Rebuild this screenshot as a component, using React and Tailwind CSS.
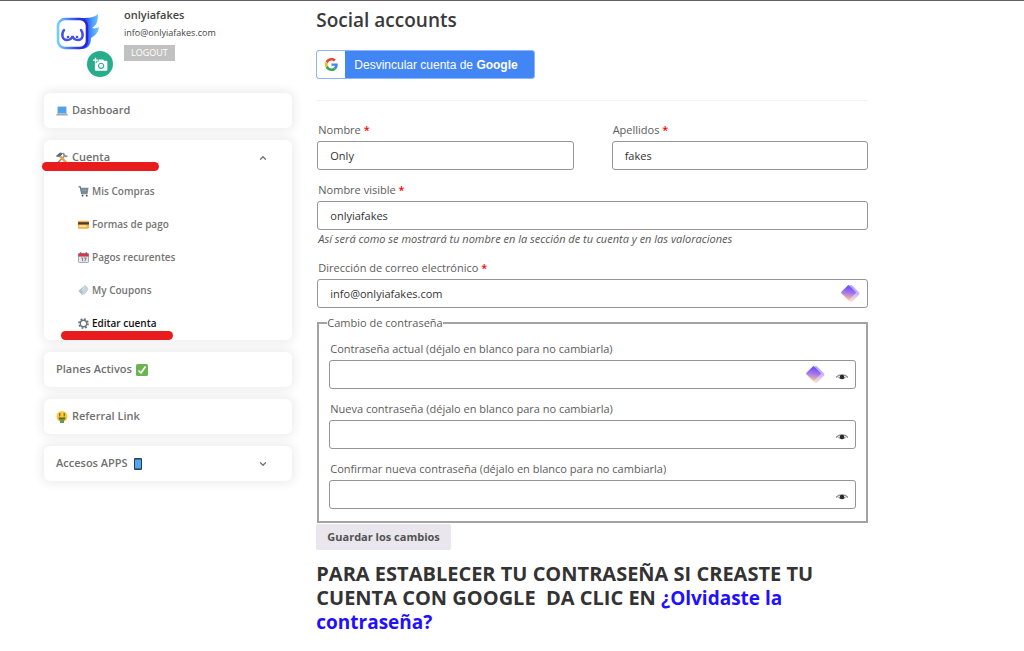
import { ChevronDown, ChevronUp } from "lucide-react";

function LogoIcon() {
  return (
    <svg viewBox="0 0 44 38" className="w-11 h-[38px]" aria-hidden="true">
      <defs>
        <linearGradient id="wing" x1="0" y1="0" x2="1" y2="0">
          <stop offset="0" stopColor="#2a2ff0" />
          <stop offset="0.6" stopColor="#2f48f2" />
          <stop offset="0.8" stopColor="#4c9cf8" />
          <stop offset="1" stopColor="#6ccbfb" />
        </linearGradient>
        <linearGradient id="frame" x1="0" y1="0" x2="1" y2="0">
          <stop offset="0" stopColor="#74d0fb" />
          <stop offset="0.7" stopColor="#2b35f0" />
          <stop offset="1" stopColor="#2323e6" />
        </linearGradient>
      </defs>
      <path d="M9 6 C20 3 35 8 42 1 C42 8 41 12 36 15 C39 16 41 15 43 14 C42 21 38 23 35 25 C35 32 32 36 25 36 Z" fill="url(#wing)" />
      <rect x="2" y="6" width="29" height="29" rx="7" fill="#fff" stroke="url(#frame)" strokeWidth="2.6" />
      <path d="M8 17 C5 21 6 27 11 27 C14 27 16 25 16.5 23 C17 25 19 27 22 27 C27 27 28 21 25 17" fill="none" stroke="#4450e8" strokeWidth="2.4" strokeLinecap="round" />
      <circle cx="12" cy="24" r="1.3" fill="#4450e8" />
      <circle cx="21" cy="24" r="1.3" fill="#4450e8" />
    </svg>
  );
}

function CameraIcon() {
  return (
    <svg viewBox="0 0 24 24" className="size-[15px]" fill="#fff" aria-hidden="true">
      <path d="M3 4V1h2v3h3v2H5v3H3V6H0V4h3zm3 6V7h3V4h7l1.830 2H21c1.100 0 2 .9 2 2v12c0 1.100-.9 2-2 2H5c-1.100 0-2-.9-2-2V10h3zm7 9c2.760 0 5-2.240 5-5s-2.240-5-5-5-5 2.240-5 5 2.240 5 5 5zm-3.200-5c0 1.770 1.430 3.200 3.200 3.200s3.200-1.430 3.200-3.200-1.430-3.200-3.200-3.200-3.200 1.430-3.200 3.200z" />
    </svg>
  );
}

function GoogleIcon() {
  return (
    <svg viewBox="0 0 48 48" className="size-[13px]" aria-hidden="true">
      <path fill="#EA4335" d="M24 9.500c3.540 0 6.710 1.220 9.210 3.600l6.850-6.850C35.900 2.380 30.470 0 24 0 14.620 0 6.510 5.380 2.560 13.220l7.980 6.190C12.430 13.720 17.740 9.500 24 9.500z" />
      <path fill="#4285F4" d="M46.980 24.550c0-1.570-.15-3.090-.38-4.550H24v9.020h12.940c-.58 2.960-2.260 5.480-4.780 7.180l7.730 6c4.510-4.180 7.090-10.360 7.090-17.650z" />
      <path fill="#FBBC05" d="M10.530 28.590c-.48-1.450-.76-2.990-.76-4.590s.27-3.140.76-4.590l-7.980-6.190C.92 16.460 0 20.120 0 24c0 3.880.92 7.540 2.560 10.780l7.970-6.190z" />
      <path fill="#34A853" d="M24 48c6.480 0 11.930-2.130 15.890-5.810l-7.730-6c-2.150 1.450-4.920 2.300-8.160 2.300-6.260 0-11.570-4.220-13.470-9.910l-7.980 6.190C6.510 42.620 14.620 48 24 48z" />
    </svg>
  );
}

function LaptopIcon() {
  return (
    <svg viewBox="0 0 24 24" className="size-3" aria-hidden="true">
      <rect x="3" y="3" width="18" height="14" rx="1" fill="#8fa3b1" />
      <rect x="4" y="4" width="16" height="12" fill="#4ea3ee" />
      <path d="M2 17h20l2 4H0z" fill="#9aabb8" />
    </svg>
  );
}

function ToolsIcon() {
  return (
    <svg viewBox="0 0 24 24" className="size-3" fill="none" aria-hidden="true">
      <path d="M3 22L17 8" stroke="#7f93a0" strokeWidth="3.500" />
      <path d="M16 2c-2 4 2 8 7 6" stroke="#7f93a0" strokeWidth="3.500" />
      <path d="M8 8L22 23" stroke="#f4a03a" strokeWidth="5" />
      <path d="M1 8L8 2l5 1-6 6z" fill="#5d6b75" stroke="#5d6b75" strokeWidth="2" />
    </svg>
  );
}

function CartIcon() {
  return (
    <svg viewBox="0 0 24 24" className="size-[11px]" aria-hidden="true">
      <path d="M1 2h4l3 15h13" fill="none" stroke="#66757f" strokeWidth="2.500" />
      <path d="M5 4h18l-2 12H7z" fill="#71838f" />
      <path d="M11 5v9M16 5v9M7 9h15" stroke="#b4c0c8" strokeWidth="0.800" />
      <circle cx="10" cy="21" r="2" fill="#3c4a53" />
      <circle cx="19" cy="21" r="2" fill="#3c4a53" />
    </svg>
  );
}

function CardIcon() {
  return (
    <svg viewBox="0 0 24 24" className="size-[11px]" aria-hidden="true">
      <rect x="0" y="4" width="24" height="17" rx="2" fill="#fbb03b" />
      <path d="M0 7h24v5H0z" fill="#4a3b32" />
      <path d="M3 14h15v3H3z" fill="#fff3d6" />
    </svg>
  );
}

function CalendarIcon() {
  return (
    <svg viewBox="0 0 24 24" className="size-[11px]" aria-hidden="true">
      <rect x="1" y="3" width="22" height="20" rx="2" fill="#e4e8ec" stroke="#7b8a95" strokeWidth="1.500" />
      <path d="M1 3h22v7H1z" fill="#d6364a" />
      <path d="M6 0v5M18 0v5" stroke="#5b6a75" strokeWidth="2" />
      <path d="M7 13h3v7M13 13h5l-3 7" fill="none" stroke="#66757f" strokeWidth="2" />
    </svg>
  );
}

function TicketIcon() {
  return (
    <svg viewBox="0 0 24 24" className="size-[11px]" aria-hidden="true">
      <path d="M1 13L11 4l6 6L9 22z" fill="#a9bcc8" />
      <path d="M11 4l4-4 3 2 5 6-1 3-8 10-5-1z" fill="#c5d3dc" />
      <path d="M7 13l7-7" stroke="#e8eff3" strokeWidth="2" />
    </svg>
  );
}

function GearIcon() {
  return (
    <svg viewBox="0 0 24 24" className="size-[11px]" fill="none" stroke="#66757f" aria-hidden="true">
      <circle cx="12" cy="12" r="7" strokeWidth="3" />
      <circle cx="12" cy="12" r="10" strokeWidth="3.500" strokeDasharray="3.930 3.930" />
    </svg>
  );
}

function CheckIcon() {
  return (
    <svg viewBox="0 0 24 24" className="size-3" aria-hidden="true">
      <rect width="24" height="24" rx="3" fill="#6cb352" />
      <path d="M5 13l5 5L19 5" fill="none" stroke="#fff" strokeWidth="3.500" />
    </svg>
  );
}

function MoneyFaceIcon() {
  return (
    <svg viewBox="0 0 24 24" className="size-3" aria-hidden="true">
      <circle cx="12" cy="11" r="11" fill="#fdc93f" />
      <path d="M7.500 4v7M16.500 4v7" stroke="#7a6a2a" strokeWidth="2.500" />
      <path d="M5 13h14c0 4-3 6-7 6s-7-2-7-6z" fill="#6b5a2a" />
      <path d="M8 16h8v8H8z" fill="#5c9e4d" />
    </svg>
  );
}

function PhoneIcon() {
  return (
    <svg viewBox="0 0 24 24" className="size-3" aria-hidden="true">
      <rect x="4" y="0" width="16" height="24" rx="2" fill="#2f3f4b" />
      <rect x="6" y="3" width="12" height="18" fill="#4fa8f2" />
    </svg>
  );
}

function DiamondIcon() {
  return (
    <svg viewBox="0 0 20 20" className="size-5" aria-hidden="true">
      <defs>
        <linearGradient id="gem" x1="0.150" y1="0" x2="0.850" y2="1">
          <stop offset="0.150" stopColor="#7a55fa" />
          <stop offset="0.5" stopColor="#a075ee" />
          <stop offset="1" stopColor="#f8b898" />
        </linearGradient>
      </defs>
      <rect x="4.500" y="3" width="13" height="13" rx="2" transform="rotate(45 11 9.500)" fill="url(#gem)" opacity="0.5" />
      <rect x="3" y="3" width="11" height="11" rx="1" transform="rotate(45 8.500 8.500)" fill="url(#gem)" />
    </svg>
  );
}

function EyeIcon() {
  return (
    <svg viewBox="0 0 12 8" className="w-3 h-2" aria-hidden="true">
      <path d="M0 4.500C3 1 9 1 12 4.500" fill="none" stroke="#8d8d8d" strokeWidth="1.200" />
      <path d="M2 4c1 3 7 3 8 0z" fill="#a5a5a5" />
      <circle cx="6" cy="4" r="2.300" fill="#2b2b2b" />
    </svg>
  );
}

const accountLinks = [
  { label: "Mis Compras", icon: <CartIcon /> },
  { label: "Formas de pago", icon: <CardIcon /> },
  { label: "Pagos recurentes", icon: <CalendarIcon /> },
  { label: "My Coupons", icon: <TicketIcon /> },
  { label: "Editar cuenta", icon: <GearIcon />, active: true },
];

const cardClass = "rounded-md bg-white shadow-[0_0_10px_3px_rgba(0,0,0,0.07)]";
const rowClass = "flex h-[35px] w-full items-center gap-1 px-3 text-[11px] font-semibold text-[#707070]";

function Sidebar() {
  return (
    <aside>
      <div className="flex h-[92px] items-start gap-3 px-3 pt-3">
        <div className="relative h-14 w-14 shrink-0">
          <LogoIcon />
          <button
            type="button"
            aria-label="Cambiar foto"
            className="absolute -right-px -bottom-2 flex size-[26px] items-center justify-center rounded-full bg-[#28ad8c]"
          >
            <CameraIcon />
          </button>
        </div>
        <div className="-mt-2 flex flex-col items-start">
          <p className="text-[11px] leading-5 font-semibold text-[#444]">onlyiafakes</p>
          <p className="text-[9px] leading-4 text-[#444]">info@onlyiafakes.com</p>
          <button type="button" className="mt-1 h-4 bg-[#c1c1c1] px-[7px] text-[9px] leading-4 text-white">
            LOGOUT
          </button>
        </div>
      </div>

      <nav className="flex flex-col gap-3">
        <div className={cardClass}>
          <a href="#dashboard" className={rowClass}>
            <LaptopIcon /> Dashboard
          </a>
        </div>

        <div className={cardClass}>
          <div className="relative">
            <button type="button" aria-expanded="true" className={rowClass}>
              <ToolsIcon /> Cuenta
              <ChevronUp size={10} strokeWidth={3} className="mr-3 ml-auto" />
            </button>
            <span className="absolute bottom-1 -left-0.5 h-[9px] w-[117px] rounded-full bg-[#e81c1c]" />
          </div>
          <ul>
            {accountLinks.map(({ label, icon, active }) => (
              <li key={label} className="relative">
                <a
                  href="#cuenta"
                  className={
                    active
                      ? "flex h-[33px] items-center gap-[3px] pl-[34px] text-[10px] font-semibold text-[#111]"
                      : "flex h-[33px] items-center gap-[3px] pl-[34px] text-[10px] font-semibold text-[#757575]"
                  }
                >
                  {icon} {label}
                </a>
                {active && <span className="absolute bottom-0 left-[17px] h-[9px] w-28 rounded-full bg-[#e81c1c]" />}
              </li>
            ))}
          </ul>
        </div>

        <div className={cardClass}>
          <a href="#planes" className={rowClass}>
            Planes Activos <CheckIcon />
          </a>
        </div>
        <div className={cardClass}>
          <a href="#referral" className={rowClass}>
            <MoneyFaceIcon /> Referral Link
          </a>
        </div>
        <div className={cardClass}>
          <button type="button" aria-expanded="false" className={rowClass}>
            Accesos APPS <PhoneIcon />
            <ChevronDown size={10} strokeWidth={3} className="mr-3 ml-auto" />
          </button>
        </div>
      </nav>
    </aside>
  );
}

function Field({ id, label, required, type = "text", value = "", gem, note }) {
  return (
    <div>
      <label htmlFor={id} className="block h-[21px] px-px text-[11px] leading-5 text-[#5c5c5c]">
        {label} {required && <span className="font-semibold text-[#f00]">*</span>}
      </label>
      <div className="relative">
        <input
          id={id}
          type={type}
          defaultValue={value}
          className="block h-[29px] w-full rounded-[3px] border border-[#959595] bg-white px-3 text-[11px] text-[#333]"
        />
        <div className="absolute inset-y-0 right-2 flex items-center gap-[11px]">
          {gem && <DiamondIcon />}
          {type === "password" && (
            <button type="button" aria-label="Mostrar contraseña" className="pt-1">
              <EyeIcon />
            </button>
          )}
        </div>
      </div>
      {note && <p className="px-px text-[11px] leading-[18px] text-[#555] italic">{note}</p>}
    </div>
  );
}

export default function App() {
  return (
    <div className="min-h-screen border-t border-[#62626a] bg-white pr-[156px] pl-11 font-['Open_Sans','Noto_Sans',sans-serif]">
      <div className="grid grid-cols-[248fr_551fr] gap-x-6">
        <Sidebar />

        <main className="pt-[7px]">
          <h2 className="text-[19px] leading-6 font-semibold text-[#3a3a3a]">Social accounts</h2>
          <button
            type="button"
            className="mt-[18px] flex h-[29px] items-center rounded-[3px] border border-[#8db5f9] bg-[#4285f4] pr-4 font-['Liberation_Sans',Arial,sans-serif] text-xs text-white"
          >
            <span className="mr-[9px] flex h-full w-7 items-center justify-center rounded-l-xs bg-white">
              <GoogleIcon />
            </span>
            <span>
              Desvincular cuenta de <b>Google</b>
            </span>
          </button>
          <hr className="mt-[21px] border-[#f3f3f3]" />

          <form className="mt-[19px] pl-px" onSubmit={(e) => e.preventDefault()}>
            <div className="flex flex-col gap-[10px]">
              <div className="grid grid-cols-2 gap-[38px]">
                <Field id="nombre" label="Nombre" required value="Only" />
                <Field id="apellidos" label="Apellidos" required value="fakes" />
              </div>
              <Field
                id="visible"
                label="Nombre visible"
                required
                value="onlyiafakes"
                note="Así será como se mostrará tu nombre en la sección de tu cuenta y en las valoraciones"
              />
              <Field id="correo" type="email" label="Dirección de correo electrónico" required value="info@onlyiafakes.com" gem />
            </div>

            <fieldset className="mt-[7px] border-2 border-[#a3a3a3] px-[10px] pb-3">
              <legend className="-ml-0.5 text-[11px] leading-4 text-[#5c5c5c]">Cambio de contraseña</legend>
              <div className="flex flex-col gap-[10px] pt-2">
                <Field id="actual" type="password" label="Contraseña actual (déjalo en blanco para no cambiarla)" gem />
                <Field id="nueva" type="password" label="Nueva contraseña (déjalo en blanco para no cambiarla)" />
                <Field id="confirmar" type="password" label="Confirmar nueva contraseña (déjalo en blanco para no cambiarla)" />
              </div>
            </fieldset>
            <button type="submit" className="-ml-px h-[26px] rounded-xs bg-[#e9e6ed] px-[11px] text-[11px] font-bold text-[#515151]">
              Guardar los cambios
            </button>
          </form>

          <h2 className="mt-3 text-xl leading-6 font-bold text-[#333]">
            PARA ESTABLECER TU CONTRASEÑA SI CREASTE TU CUENTA CON GOOGLE&nbsp; DA CLIC EN{" "}
            <a href="#recuperar" className="text-[19px] text-[#1f10ff]">
              ¿Olvidaste la contraseña?
            </a>
          </h2>
        </main>
      </div>
    </div>
  );
}
